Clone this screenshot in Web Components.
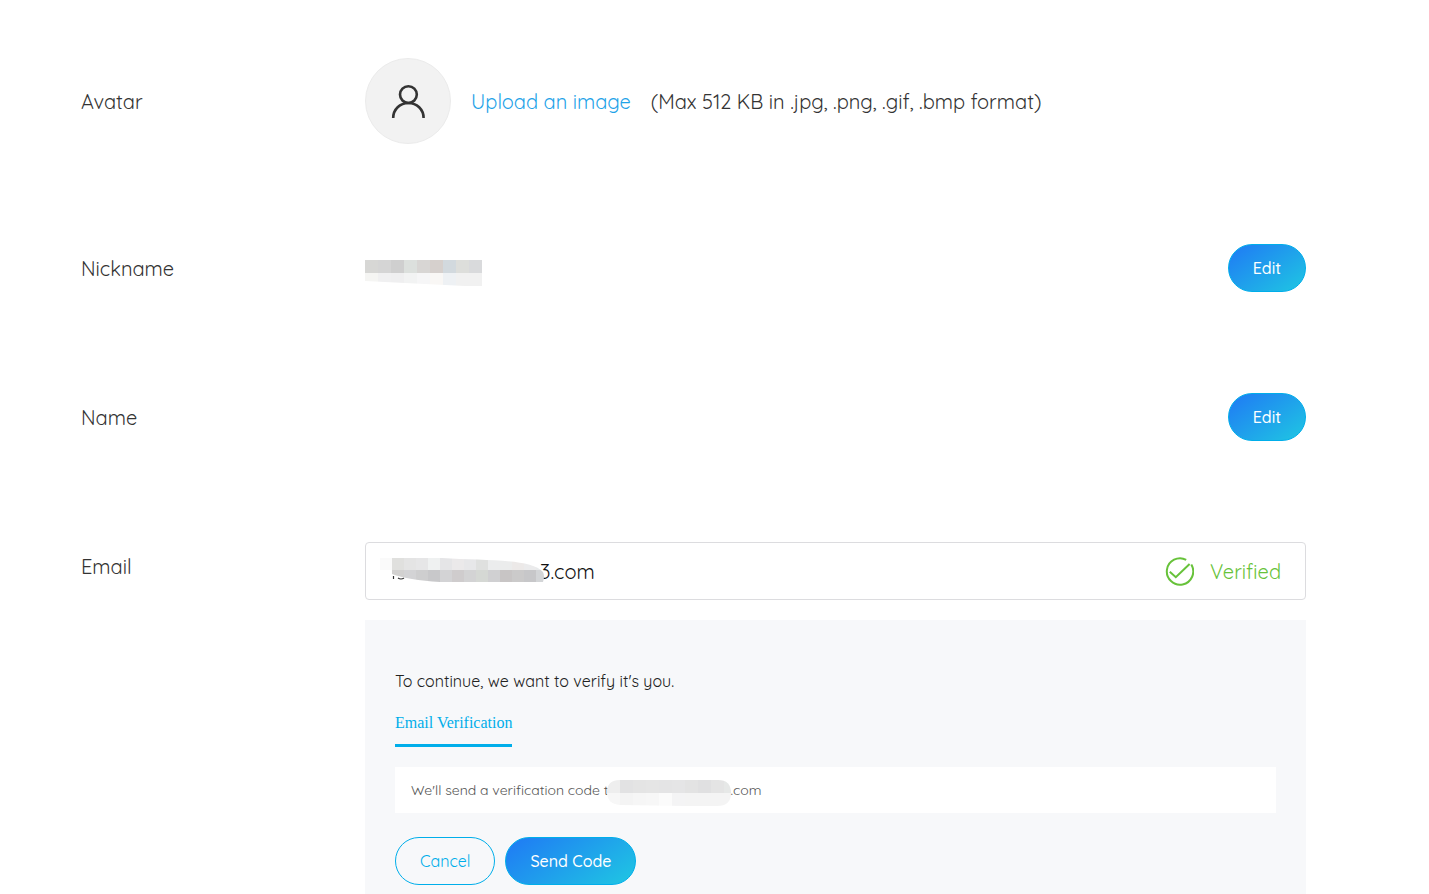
<!DOCTYPE html>
<html lang="en">
<head>
<meta charset="UTF-8" />
<meta name="viewport" content="width=device-width, initial-scale=1" />
<title>Account settings</title>
<style>
  :root {
    --accent: #00aeea;
    --blue: #1f80f3;
    --cyan: #1fc0e4;
    --green: #67c23a;
    --text: #333;
    --panel: #f7f8fa;
    --border: #dcdcdf;
  }
  body {
    background: #fff;
    color: var(--text);
    font-family: Quicksand, Lato, sans-serif;
    font-size: 20px;
    font-weight: 400;
    margin: 0;
  }
</style>
</head>
<body>
<account-settings></account-settings>

<script>
class PillButton extends HTMLElement {
  connectedCallback() {
    const shadowRoot = this.attachShadow({ mode: "open" });
    shadowRoot.innerHTML = `
    <style>
    :host {
      display: inline-block;
    }
    button {
      background: linear-gradient(145deg, var(--blue) 10%, var(--cyan) 90%) border-box;
      border: 1px solid var(--accent);
      border-radius: 24px;
      box-sizing: border-box;
      color: #fff;
      cursor: pointer;
      display: block;
      font-family: inherit;
      font-size: 16px;
      font-weight: 500;
      height: 48px;
      padding: 0 24px;
    }
    :host([outline]) button {
      background: transparent;
      color: var(--accent);
      font-weight: 400;
    }
    </style>
    <button type="button"><slot></slot></button>
  `;
  }
}

class SettingRow extends HTMLElement {
  connectedCallback() {
    const shadowRoot = this.attachShadow({ mode: "open" });
    shadowRoot.innerHTML = `
    <style>
    :host {
      align-items: start;
      display: grid;
      grid-template-columns: 284px 1fr;
      min-height: 49px;
    }
    :host([start]) {
      align-items: center;
    }
    .label {
      line-height: 49px;
    }
    .content {
      align-items: center;
      display: flex;
      gap: 20px;
      justify-content: space-between;
      min-width: 0;
    }
    :host([start]) .content {
      justify-content: flex-start;
    }
    :host([stacked]) .content {
      align-items: stretch;
      flex-direction: column;
    }
    </style>
    <div class="label">${this.getAttribute("label")}</div>
    <div class="content"><slot></slot></div>
  `;
  }
}

class UserAvatar extends HTMLElement {
  connectedCallback() {
    const shadowRoot = this.attachShadow({ mode: "open" });
    shadowRoot.innerHTML = `
    <style>
    :host {
      align-items: center;
      background: #f2f2f2;
      border: 1px solid #ebebeb;
      border-radius: 50%;
      box-sizing: border-box;
      display: flex;
      height: 86px;
      justify-content: center;
      width: 86px;
    }
    </style>
    <svg width="36" height="36" viewBox="0 0 36 36" fill="none" stroke="#333" stroke-width="2.6" aria-hidden="true">
      <circle cx="18.4" cy="11.6" r="8.4" />
      <path d="M3.2 35C3.2 26.4 10 20 18.4 20S33.600 26.400 33.600 35" />
    </svg>
  `;
  }
}

// Blocks of colour that cover private text. Each row is a list of cell colours.
class PixelMask extends HTMLElement {
  connectedCallback() {
    const { width, height, cell, clip, rows, marks = "" } = PixelMask.shapes[this.getAttribute("shape")];
    const cells = rows
      .map((row, y) =>
        row
          .split(" ")
          .map((fill, x) => `<rect x="${x * cell}" y="${y * cell}" width="${cell}" height="${cell}" fill="#${fill}" />`)
          .join("")
      )
      .join("");
    const shadowRoot = this.attachShadow({ mode: "open" });
    shadowRoot.innerHTML = `
    <style>
    :host {
      display: inline-block;
      flex: none;
    }
    svg {
      display: block;
    }
    </style>
    <svg width="${width}" height="${height}" aria-hidden="true">
      <clipPath id="clip"><path d="${clip}" /></clipPath>
      ${marks}
      <g clip-path="url(#clip)">${cells}</g>
    </svg>
  `;
  }
}

PixelMask.shapes = {
  nickname: {
    width: 117,
    height: 26,
    cell: 13,
    clip: "M0 0H117V26H100L0 21Z",
    rows: [
      "d7d7d5 d5d5d5 cfcfcf dce0dd d8d6d4 d6d0cd d2d9de dddedb d9dadc",
      "f5f5f3 f0f0f1 efeff0 f2f3f3 f6f6f7 f9f7f5 eef1f4 f1f1f1 f1f1f1",
    ],
  },
  email: {
    width: 166,
    height: 26,
    cell: 12,
    clip: "M0 0H62C105 3 151 0 163 14Q165 18 163 24H60Q28 22 12 16V12H0Z",
    marks: '<path d="M13.500 18V21M18 20Q21 22 24 20" fill="none" stroke="#333" stroke-width="1.200" />',
    rows: [
      "fafafa e0e0de e4e4e4 e6e6e7 eff1f1 e5e5e7 ebe9ea e7e7e9 dfe0df ebeced ebecec ece9e8 ebebec e8eaeb",
      "fafafa d2d1d0 d3d3d5 cececf c8c8ca d3d3d5 cfcccd d3d3d4 d5d8d4 d0d0d2 c8c5c5 cbcaca c7c7c9 d3d5d7",
    ],
  },
  code: {
    width: 124,
    height: 26,
    cell: 13,
    clip: "M13 0H111Q124 0 124 13Q124 26 110 26H80L13 25Q0 24 0 12Q0 0 13 0Z",
    rows: [
      "eeeeee e2e2e3 e4e4e4 e5e5e5 e4e4e5 e5e5e6 e3e3e3 e0e0e1 e4e4e4 e6e8e7",
      "f7f7f7 f4f4f4 f6f6f6 f7f7f7 fbfbfb f4f4f5 f4f4f4 f4f4f4 f4f4f4 f4f4f4",
    ],
  },
};

class EmailField extends HTMLElement {
  connectedCallback() {
    const shadowRoot = this.attachShadow({ mode: "open" });
    shadowRoot.innerHTML = `
    <style>
    :host {
      align-items: center;
      border: 1px solid var(--border);
      border-radius: 4px;
      box-sizing: border-box;
      display: flex;
      height: 58px;
      padding: 0 24px 0 14px;
    }
    pixel-mask {
      margin-right: -6px;
      z-index: 1;
    }
    input {
      background: transparent;
      border: 0;
      color: #111;
      flex: 1;
      font: inherit;
      line-height: 28px;
      min-width: 0;
      outline: 0;
      padding: 2px 0 0;
    }
    .status {
      align-items: center;
      color: var(--green);
      display: flex;
      gap: 16px;
    }
    </style>
    <pixel-mask shape="email"></pixel-mask>
    <input type="text" aria-label="Email" value="3.com" readonly />
    <div class="status">
      <svg width="30" height="30" viewBox="0 0 30 30" fill="none" stroke="currentColor" stroke-width="2" aria-hidden="true">
        <path d="M22.200 3.800A13.200 13.200 0 1 0 27.300 8.600" />
        <path d="M5.800 15.800L11.800 21.200L25.600 8" />
      </svg>
      <span>Verified</span>
    </div>
  `;
  }
}

class VerifyPanel extends HTMLElement {
  connectedCallback() {
    const shadowRoot = this.attachShadow({ mode: "open" });
    shadowRoot.innerHTML = `
    <style>
    :host {
      background: var(--panel);
      display: block;
      font-size: 16px;
      padding: 49px 30px 9px;
    }
    p {
      color: #222;
      line-height: 24px;
      margin: 0 0 20px;
    }
    .tab {
      background: none;
      border: 0;
      border-bottom: 3px solid var(--accent);
      color: var(--accent);
      display: block;
      font: 16px/20px "Liberation Serif", serif;
      margin: 0 0 20px;
      padding: 0 0 11px;
    }
    .notice {
      align-items: center;
      background: #fff;
      color: #555;
      display: flex;
      font-size: 14px;
      height: 46px;
      margin-bottom: 24px;
      padding: 0 16px;
    }
    .notice pixel-mask {
      margin-left: -2px;
      padding-top: 5px;
    }
    .actions {
      display: flex;
      gap: 10px;
    }
    </style>
    <p>To continue, we want to verify it's you.</p>
    <button class="tab" type="button">Email Verification</button>
    <div class="notice">
      <span>We'll send a verification code t</span>
      <pixel-mask shape="code"></pixel-mask>
      <span>.com</span>
    </div>
    <div class="actions">
      <pill-button outline>Cancel</pill-button>
      <pill-button>Send Code</pill-button>
    </div>
  `;
  }
}

class AccountSettings extends HTMLElement {
  connectedCallback() {
    const shadowRoot = this.attachShadow({ mode: "open" });
    shadowRoot.innerHTML = `
    <style>
    :host {
      display: flex;
      flex-direction: column;
      gap: 100px;
      padding: 58px 123px 0 81px;
    }
    .upload {
      display: flex;
      flex-wrap: wrap;
      gap: 20px;
    }
    a {
      color: #1fa3e8;
      text-decoration: none;
    }
    pixel-mask {
      padding-top: 10px;
    }
    </style>
    <setting-row label="Avatar" start>
      <user-avatar></user-avatar>
      <div class="upload">
        <a href="#upload">Upload an image</a>
        <span>(Max 512 KB in .jpg, .png, .gif, .bmp format)</span>
      </div>
    </setting-row>
    <setting-row label="Nickname">
      <pixel-mask shape="nickname"></pixel-mask>
      <pill-button>Edit</pill-button>
    </setting-row>
    <setting-row label="Name">
      <span></span>
      <pill-button>Edit</pill-button>
    </setting-row>
    <setting-row label="Email" stacked>
      <email-field></email-field>
      <verify-panel></verify-panel>
    </setting-row>
  `;
  }
}

window.customElements.define("pill-button", PillButton);
window.customElements.define("setting-row", SettingRow);
window.customElements.define("user-avatar", UserAvatar);
window.customElements.define("pixel-mask", PixelMask);
window.customElements.define("email-field", EmailField);
window.customElements.define("verify-panel", VerifyPanel);
window.customElements.define("account-settings", AccountSettings);
</script>
</body>
</html>
